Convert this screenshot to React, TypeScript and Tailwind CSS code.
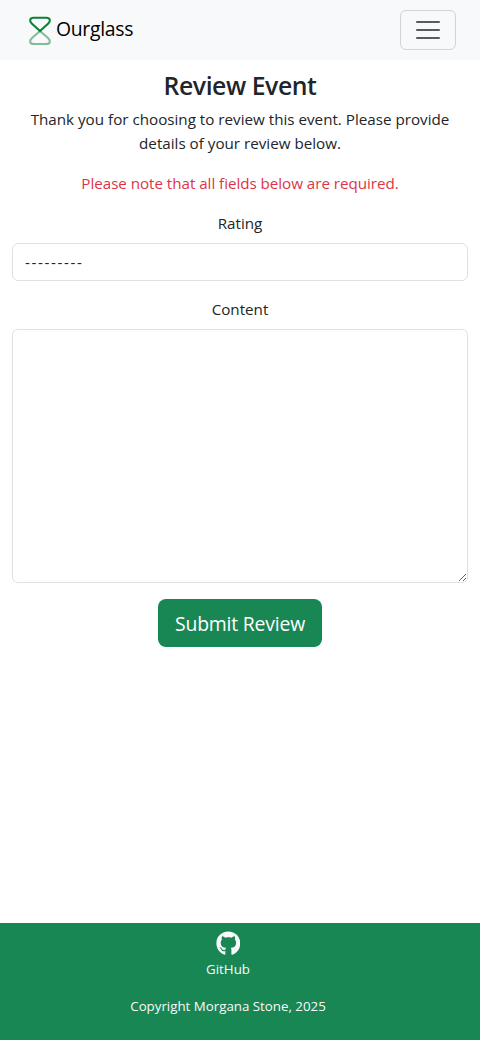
import React from "react";
import { FaGithub } from "react-icons/fa";

export default function App() {
  return (
    <div className="flex min-h-[1040px] flex-col bg-white font-['Open_Sans','Noto_Sans',sans-serif] text-[15.2px] leading-6 text-[#212529]">
      <header className="flex h-[60px] items-center justify-between bg-[#f8f9fa] px-6">
        <a href="#" className="flex items-center text-[19.4px] tracking-[-0.3px] text-black">
          <svg width="32" height="32" viewBox="0 0 32 32" fill="none" strokeWidth="2.1" strokeLinejoin="round">
            <path d="M16 17L8 24C4.8 27 6 30 9.5 30H22.5C26 30 27.2 27 24 24Z" stroke="#83bd98" />
            <path d="M16 17L8 9.8C4.8 6.8 6 3.7 9.5 3.7H22.5C26 3.7 27.2 6.8 24 9.8Z" stroke="#078132" />
          </svg>
          <span className="-mt-0.5">Ourglass</span>
        </a>
        <button type="button" aria-label="Toggle navigation" className="flex h-10 w-14 items-center justify-center rounded-md border border-[#d2d4d5]">
          <svg width="30" height="30" viewBox="0 0 30 30" stroke="#212529" strokeOpacity=".75" strokeLinecap="round" strokeWidth="2">
            <path d="M4 7h22M4 15h22M4 23h22" />
          </svg>
        </button>
      </header>
      <main className="flex flex-col px-3 pt-[9px] text-center">
        <h1 className="mb-[7px] text-[24.8px] leading-[32px] font-semibold tracking-[-0.45px]">Review Event</h1>
        <p className="-mt-px mb-4 px-2">
          Thank you for choosing to review this event. Please provide<br />details of your review below.
        </p>
        <p className="mb-4 tracking-[-0.04px] text-[#dc3545]">Please note that all fields below are required.</p>
        <form className="flex flex-col">
          <label htmlFor="rating" className="mb-2">Rating</label>
          <select id="rating" className="mb-4 h-[38px] w-full appearance-none rounded-md border border-[#dee2e6] bg-white px-3 tracking-[1.6px]">
            <option>---------</option>
          </select>
          <label htmlFor="content" className="mb-2">Content</label>
          <textarea id="content" className="mb-4 h-[254px] w-full resize-y rounded-md border border-[#dee2e6] bg-white px-3 py-1.5" />
          <button type="button" className="h-12 w-[164px] self-center rounded-lg bg-[#198754] pt-0.5 text-[19.4px] tracking-[-0.2px] text-white">Submit Review</button>
        </form>
      </main>
      <footer className="mt-auto flex h-[117px] flex-col items-center bg-[#198754] pt-[7.5px] pr-6 text-[13.3px] leading-[21px] text-[#f8f9fa]">
        <a href="#" className="flex flex-col items-center">
          <FaGithub size={24.7} />
          <span className="mt-[3.8px]">GitHub</span>
        </a>
        <p className="mt-4">Copyright Morgana Stone, 2025</p>
      </footer>
    </div>
  );
}
